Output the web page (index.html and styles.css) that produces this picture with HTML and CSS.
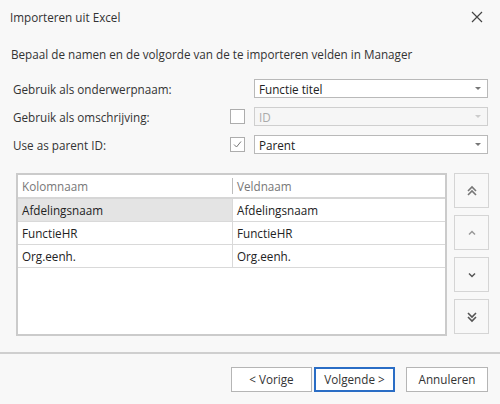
FILE: index.html
```html
<!DOCTYPE html>
<html>
<head>
<meta charset="utf-8">
<link rel="stylesheet" href="styles.css">
</head>
<body>
<div class="dialog">
  <div class="titlebar">
    <span class="title">Importeren uit Excel</span>
    <svg class="close" width="12" height="12" viewBox="0 0 12 12"><path d="M1 1L11 11M11 1L1 11" stroke="#444" stroke-width="1.2" fill="none"/></svg>
  </div>
  <div class="content">
    <div class="intro">Bepaal de namen en de volgorde van de te importeren velden in Manager</div>
    <div class="form">
      <div class="row">
        <span class="label">Gebruik als onderwerpnaam:</span>
        <span class="chkslot"></span>
        <div class="combo"><span>Functie titel</span><span class="arrow"></span></div>
      </div>
      <div class="row">
        <span class="label">Gebruik als omschrijving:</span>
        <span class="chkslot"><span class="chk"></span></span>
        <div class="combo disabled"><span>ID</span><span class="arrow"></span></div>
      </div>
      <div class="row">
        <span class="label">Use as parent ID:</span>
        <span class="chkslot"><span class="chk"><svg width="11" height="11" viewBox="0 0 11 11"><path d="M2 5.5L4.5 8L9 2.5" stroke="#777" stroke-width="1" fill="none"/></svg></span></span>
        <div class="combo"><span>Parent</span><span class="arrow"></span></div>
      </div>
    </div>
    <div class="gridarea">
      <div class="grid">
        <div class="ghead">
          <div class="cell c1">Kolomnaam</div>
          <div class="cell c2">Veldnaam</div>
        </div>
        <div class="grow">
          <div class="cell c1 focus">Afdelingsnaam</div>
          <div class="cell c2">Afdelingsnaam</div>
        </div>
        <div class="grow">
          <div class="cell c1">FunctieHR</div>
          <div class="cell c2">FunctieHR</div>
        </div>
        <div class="grow">
          <div class="cell c1">Org.eenh.</div>
          <div class="cell c2">Org.eenh.</div>
        </div>
      </div>
      <div class="movers">
        <div class="mbtn"><svg width="12" height="12" viewBox="0 0 12 12"><path d="M2 6L6 2L10 6M2 10L6 6L10 10" stroke="#777" stroke-width="1.6" fill="none"/></svg></div>
        <div class="mbtn"><svg width="12" height="12" viewBox="0 0 12 12"><path d="M3 7.5L6 4.5L9 7.5" stroke="#999" stroke-width="1.5" fill="none"/></svg></div>
        <div class="mbtn"><svg width="12" height="12" viewBox="0 0 12 12"><path d="M3 4.5L6 7.5L9 4.5" stroke="#555" stroke-width="1.5" fill="none"/></svg></div>
        <div class="mbtn"><svg width="12" height="12" viewBox="0 0 12 12"><path d="M2 2L6 6L10 2M2 6L6 10L10 6" stroke="#555" stroke-width="1.6" fill="none"/></svg></div>
      </div>
    </div>
  </div>
  <div class="footer">
    <button class="btn">&lt; Vorige</button>
    <button class="btn primary">Volgende &gt;</button>
    <button class="btn cancel">Annuleren</button>
  </div>
</div>
</body>
</html>
```

FILE: styles.css
```css
* { box-sizing: border-box; }
html, body { margin: 0; padding: 0; }
body {
  font-family: "Open Sans", "Noto Sans", sans-serif;
  font-size: 11.7px;
  color: #333;
  background: #f8f8f8;
}
.dialog {
  width: 500px;
  height: 404px;
  background: #f8f8f8;
  display: flex;
  flex-direction: column;
}
.titlebar {
  height: 34px;
  display: flex;
  align-items: center;
  justify-content: space-between;
  padding: 0 17px 0 10px;
  flex: none;
}
.title { color: #333; }
.content {
  padding: 10px 11px 0 16px;
  flex: 1;
  display: flex;
  flex-direction: column;
}
.intro { margin-left: -5px; height: 20px; line-height: 20px; margin-bottom: 15px; }
.form { display: flex; flex-direction: column; gap: 9px; margin-left: -3px; }
.row {
  display: flex;
  align-items: center;
  height: 19px;
}
.label { width: 217px; flex: none; }
.chkslot { width: 24px; flex: none; display: flex; align-items: center; }
.chk {
  width: 15px; height: 15px;
  border: 1px solid #adadad;
  background: #fff;
  display: flex; align-items: center; justify-content: center;
}
.combo {
  flex: none;
  width: 234px;
  height: 19px;
  border: 1px solid #b9b9b9;
  background: #fff;
  display: flex;
  align-items: center;
  justify-content: space-between;
  padding: 0 6px 0 4px;
  color: #222;
}
.combo.disabled { background: #f6f6f6; border-color: #cfcfcf; color: #aaa; }
.arrow {
  width: 0; height: 0;
  border-left: 3px solid transparent;
  border-right: 3px solid transparent;
  border-top: 3px solid #777;
}
.combo.disabled .arrow { border-top-color: #ccc; }
.gridarea {
  margin-top: 19px;
  display: flex;
  gap: 7px;
}
.grid {
  width: 431px;
  height: 163px;
  border: 2px solid #cbcbcb;
  background: #fff;
}
.ghead, .grow { display: flex; height: 23px; border-bottom: 1px solid #d9d9d9; }
.ghead { height: 24px; border-bottom: 2px solid #d6d6d6; color: #777; }
.cell { display: flex; align-items: center; padding-left: 4px; }
.c1 { width: 214px; }
.c2 { flex: 1; border-left: 1px solid #d9d9d9; }
.ghead .c2 { border-left: 1px solid #bdbdbd; margin: 3px 0; }
.grow .c1 { color: #222; }
.grow .c2 { color: #222; }
.focus { background: #e4e4e4; }
.movers { display: flex; flex-direction: column; gap: 7px; }
.mbtn {
  width: 35px; height: 35px;
  border: 1px solid #d5d5d5;
  background: #f8f8f8;
  display: flex; align-items: center; justify-content: center;
}
.footer {
  flex: none;
  height: 52px;
  border-top: 2px solid #cfcfcf;
  display: flex;
  align-items: center;
  justify-content: flex-end;
  padding: 0 12px 0 0;
  gap: 2px;
}
.btn {
  font-family: inherit;
  font-size: 11.7px;
  color: #333;
  width: 81px;
  height: 25px;
  border: 1px solid #b5b5b5;
  background: #fff;
  padding: 0;
}
.btn.primary { border: 2px solid #2a6dc5; }
.btn.cancel { margin-left: 9px; width: 82px; }
```
